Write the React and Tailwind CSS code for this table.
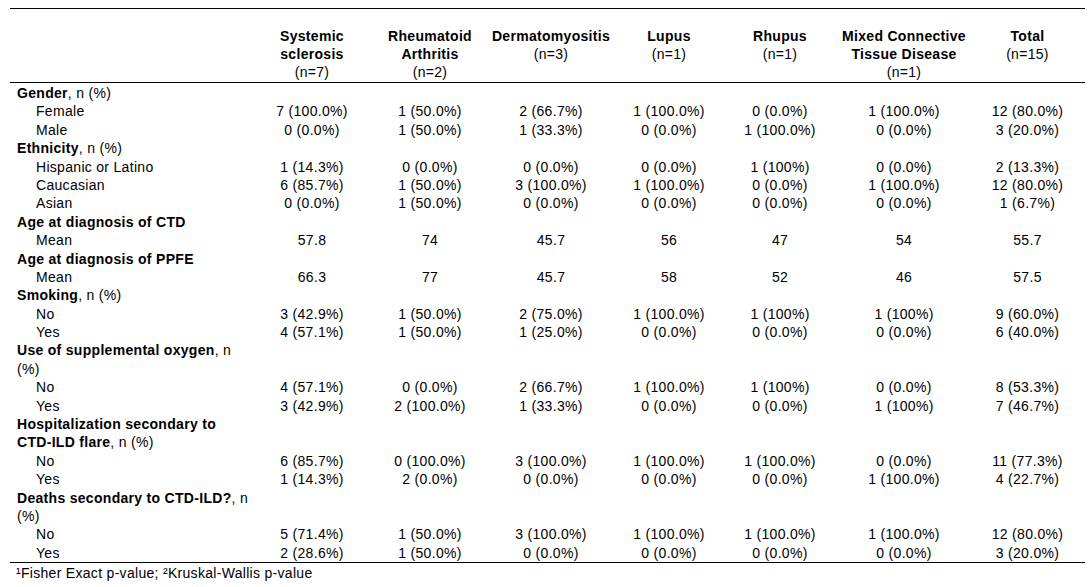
const COLS = 'grid grid-cols-[240px_124px_112px_130px_106px_116px_132px_115px]'

const HEADERS = [
  { name: ['Systemic', 'sclerosis'], n: '(n=7)' },
  { name: ['Rheumatoid', 'Arthritis'], n: '(n=2)' },
  { name: ['Dermatomyositis'], n: '(n=3)' },
  { name: ['Lupus'], n: '(n=1)' },
  { name: ['Rhupus'], n: '(n=1)' },
  { name: ['Mixed Connective', 'Tissue Disease'], n: '(n=1)' },
  { name: ['Total'], n: '(n=15)' },
]

const ROWS = [
  { head: 'Gender', rest: ', n (%)' },
  { label: 'Female', v: ['7 (100.0%)', '1 (50.0%)', '2 (66.7%)', '1 (100.0%)', '0 (0.0%)', '1 (100.0%)', '12 (80.0%)'] },
  { label: 'Male', v: ['0 (0.0%)', '1 (50.0%)', '1 (33.3%)', '0 (0.0%)', '1 (100.0%)', '0 (0.0%)', '3 (20.0%)'] },
  { head: 'Ethnicity', rest: ', n (%)' },
  { label: 'Hispanic or Latino', v: ['1 (14.3%)', '0 (0.0%)', '0 (0.0%)', '0 (0.0%)', '1 (100%)', '0 (0.0%)', '2 (13.3%)'] },
  { label: 'Caucasian', v: ['6 (85.7%)', '1 (50.0%)', '3 (100.0%)', '1 (100.0%)', '0 (0.0%)', '1 (100.0%)', '12 (80.0%)'] },
  { label: 'Asian', v: ['0 (0.0%)', '1 (50.0%)', '0 (0.0%)', '0 (0.0%)', '0 (0.0%)', '0 (0.0%)', '1 (6.7%)'] },
  { head: 'Age at diagnosis of CTD' },
  { label: 'Mean', v: ['57.8', '74', '45.7', '56', '47', '54', '55.7'] },
  { head: 'Age at diagnosis of PPFE' },
  { label: 'Mean', v: ['66.3', '77', '45.7', '58', '52', '46', '57.5'] },
  { head: 'Smoking', rest: ', n (%)' },
  { label: 'No', v: ['3 (42.9%)', '1 (50.0%)', '2 (75.0%)', '1 (100.0%)', '1 (100%)', '1 (100%)', '9 (60.0%)'] },
  { label: 'Yes', v: ['4 (57.1%)', '1 (50.0%)', '1 (25.0%)', '0 (0.0%)', '0 (0.0%)', '0 (0.0%)', '6 (40.0%)'] },
  { head: 'Use of supplemental oxygen', rest: ', n' },
  { head: '', rest: '(%)' },
  { label: 'No', v: ['4 (57.1%)', '0 (0.0%)', '2 (66.7%)', '1 (100.0%)', '1 (100%)', '0 (0.0%)', '8 (53.3%)'] },
  { label: 'Yes', v: ['3 (42.9%)', '2 (100.0%)', '1 (33.3%)', '0 (0.0%)', '0 (0.0%)', '1 (100%)', '7 (46.7%)'] },
  { head: 'Hospitalization secondary to' },
  { head: 'CTD-ILD flare', rest: ', n (%)' },
  { label: 'No', v: ['6 (85.7%)', '0 (100.0%)', '3 (100.0%)', '1 (100.0%)', '1 (100.0%)', '0 (0.0%)', '11 (77.3%)'] },
  { label: 'Yes', v: ['1 (14.3%)', '2 (0.0%)', '0 (0.0%)', '0 (0.0%)', '0 (0.0%)', '1 (100.0%)', '4 (22.7%)'] },
  { head: 'Deaths secondary to CTD-ILD?', rest: ', n' },
  { head: '', rest: '(%)' },
  { label: 'No', v: ['5 (71.4%)', '1 (50.0%)', '3 (100.0%)', '1 (100.0%)', '1 (100.0%)', '1 (100.0%)', '12 (80.0%)'] },
  { label: 'Yes', v: ['2 (28.6%)', '1 (50.0%)', '0 (0.0%)', '0 (0.0%)', '0 (0.0%)', '0 (0.0%)', '3 (20.0%)'] },
]

export default function App() {
  return (
    <div
      className="w-[1092px] h-[587px] bg-white text-black text-[14px] tracking-[0.3px] overflow-hidden"
      style={{ fontFamily: '"Liberation Sans", Arial, sans-serif' }}
    >
      <div className="ml-[10px] mt-[8px] w-[1075px]">
        {/* header */}
        <div className={`${COLS} border-t border-b border-black pt-[18px] pb-px leading-[18px]`}>
          <div />
          {HEADERS.map((h, i) => (
            <div key={i} className="flex flex-col items-center text-center">
              {h.name.map((line) => (
                <span key={line} className="font-bold whitespace-nowrap">{line}</span>
              ))}
              <span>{h.n}</span>
            </div>
          ))}
        </div>

        {/* body */}
        <div className="border-b border-black pt-px">
          {ROWS.map((r, i) => (
            <div key={i} className={`${COLS} h-[18.4px] leading-[18.4px]`}>
              {r.v ? (
                <>
                  <div className="pl-[26px] whitespace-nowrap">{r.label}</div>
                  {r.v.map((x, j) => (
                    <div key={j} className="text-center whitespace-nowrap">{x}</div>
                  ))}
                </>
              ) : (
                <div className="col-span-8 pl-[7px] whitespace-nowrap">
                  {r.head && <span className="font-bold">{r.head}</span>}
                  {r.rest}
                </div>
              )}
            </div>
          ))}
        </div>

        <div className="pl-[6px] leading-[18px] pt-px">¹Fisher Exact p-value; ²Kruskal-Wallis p-value</div>
      </div>
    </div>
  )
}
